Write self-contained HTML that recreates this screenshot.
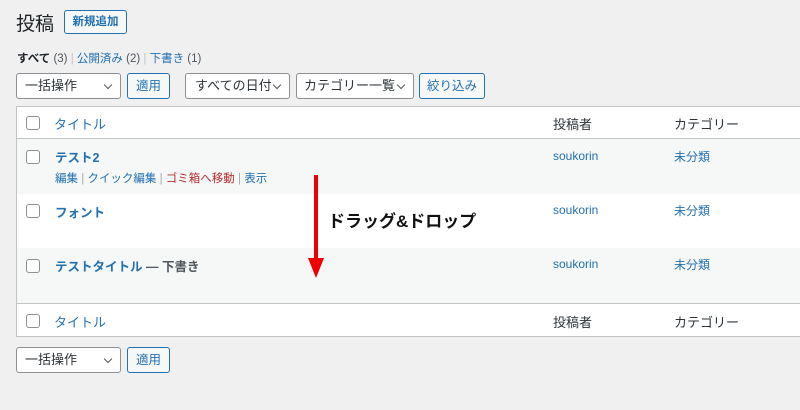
<!DOCTYPE html><html><head><meta charset="utf-8"><style>
*{box-sizing:border-box;margin:0;padding:0}
body{width:800px;height:410px;background:#f0f0f1;font-family:"Liberation Sans","Noto Sans CJK JP",sans-serif;color:#3c434a;font-size:13px;position:relative;overflow:hidden}
.a{position:absolute;white-space:nowrap}
.l{color:#2271b1}
.btn{position:absolute;border:1px solid #2271b1;border-radius:3px;background:#f6f7f7;color:#2271b1;font-size:12.5px;text-align:center}
.sel{position:absolute;border:1px solid #8c8f94;border-radius:3px;background:#fff;color:#2c3338;font-size:13px;padding-left:8px}
.sel:after{content:"";position:absolute;right:9px;top:8px;width:5px;height:5px;border-right:1.5px solid #50575e;border-bottom:1.5px solid #50575e;transform:rotate(45deg)}
.cb{position:absolute;width:14px;height:14px;border:1px solid #8c8f94;border-radius:3px;background:#fff;left:26px}
.row{position:absolute;left:16px;width:800px;border-left:1px solid #c3c4c7}
</style></head><body>
<div class="a" style="left:16px;top:9px;font-size:19px;color:#1d2327">投稿</div>
<div class="btn" style="left:64px;top:10px;width:63px;height:24px;line-height:22px;font-weight:bold;font-size:11.5px">新規追加</div>
<div class="a" style="left:17px;top:50px;font-size:11.5px"><b style="color:#1d2327">すべて</b> <span style="color:#50575e">(3)</span> <span style="color:#c3c4c7">|</span> <span class="l">公開済み</span> <span style="color:#50575e">(2)</span> <span style="color:#c3c4c7">|</span> <span class="l">下書き</span> <span style="color:#50575e">(1)</span></div>
<div class="sel" style="left:16px;top:73px;width:105px;height:26px;line-height:24px">一括操作</div>
<div class="btn" style="left:127px;top:73px;width:43px;height:26px;line-height:24px">適用</div>
<div class="sel" style="left:185px;top:73px;width:105px;height:26px;line-height:24px;padding-left:9px">すべての日付</div>
<div class="sel" style="left:296px;top:73px;width:118px;height:26px;line-height:24px;padding-left:7px">カテゴリー一覧</div>
<div class="btn" style="left:419px;top:73px;width:66px;height:26px;line-height:24px">絞り込み</div>
<div class="row" style="top:106px;height:33px;background:#fff;border-top:1px solid #c3c4c7;border-bottom:1px solid #c3c4c7"></div>
<div class="row" style="top:139px;height:55px;background:#f6f7f7"></div>
<div class="row" style="top:194px;height:54px;background:#fff"></div>
<div class="row" style="top:248px;height:55px;background:#f6f7f7"></div>
<div class="row" style="top:303px;height:34px;background:#fff;border-top:1px solid #c3c4c7;border-bottom:1px solid #c3c4c7"></div>
<div class="cb" style="top:116px"></div><div class="a l" style="left:54px;top:114px;font-size:13px">タイトル</div>
<div class="a" style="left:553px;top:114px;font-size:13px;color:#2c3338">投稿者</div><div class="a" style="left:674px;top:114px;font-size:13px;color:#2c3338">カテゴリー</div>
<div class="cb" style="top:150px"></div><div class="a l" style="left:55px;top:147px;font-weight:bold;font-size:12.5px">テスト2</div>
<div class="a" style="left:55px;top:170px;font-size:11.5px"><span class="l">編集</span> <span style="color:#a7aaad">|</span> <span class="l">クイック編集</span> <span style="color:#a7aaad">|</span> <span style="color:#b32d2e">ゴミ箱へ移動</span> <span style="color:#a7aaad">|</span> <span class="l">表示</span></div>
<div class="cb" style="top:204px"></div><div class="a l" style="left:55px;top:202px;font-weight:bold;font-size:12.5px">フォント</div>
<div class="cb" style="top:259px"></div><div class="a" style="left:55px;top:256px;font-weight:bold;font-size:12.5px"><span class="l">テストタイトル</span> <span style="color:#50575e">— 下書き</span></div>
<div class="a l" style="left:553px;top:149px;font-size:12px">soukorin</div><div class="a l" style="left:674px;top:148px;font-size:12px">未分類</div>
<div class="a l" style="left:553px;top:203px;font-size:12px">soukorin</div><div class="a l" style="left:674px;top:202px;font-size:12px">未分類</div>
<div class="a l" style="left:553px;top:257px;font-size:12px">soukorin</div><div class="a l" style="left:674px;top:256px;font-size:12px">未分類</div>
<div class="a" style="left:328px;top:207px;font-size:17px;font-weight:bold;color:#111">ドラッグ&amp;ドロップ</div>
<svg class="a" style="left:305px;top:172px" width="22" height="110"><rect x="9" y="3" width="4" height="85" fill="#e00"/><polygon points="3,86 19,86 11,106" fill="#e00"/></svg>
<div class="cb" style="top:314px"></div><div class="a l" style="left:54px;top:312px;font-size:13px">タイトル</div>
<div class="a" style="left:553px;top:312px;font-size:13px;color:#2c3338">投稿者</div><div class="a" style="left:674px;top:312px;font-size:13px;color:#2c3338">カテゴリー</div>
<div class="sel" style="left:16px;top:347px;width:105px;height:26px;line-height:24px">一括操作</div>
<div class="btn" style="left:127px;top:347px;width:43px;height:26px;line-height:24px">適用</div>
</body></html>
